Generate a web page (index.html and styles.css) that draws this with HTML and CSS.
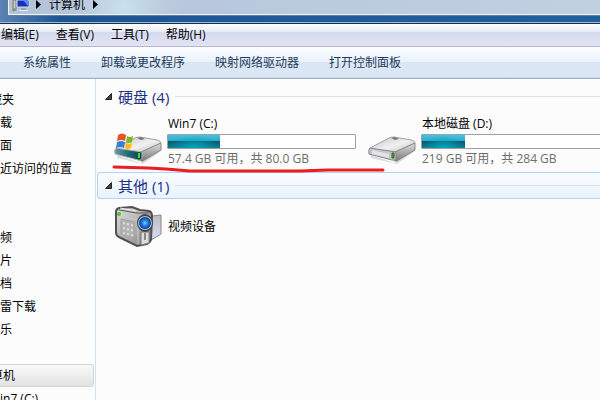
FILE: index.html
```html
<!DOCTYPE html>
<html lang="zh-CN">
<head>
  <meta charset="UTF-8" />
  <title>计算机</title>
  <link rel="stylesheet" href="styles.css">
</head>
<body>
  <header class="titlebar">
    <nav class="address">
      <svg class="pc-icon" width="18" height="12" viewBox="0 0 18 12">
        <path d="M1 0h3v10l-3 1z" fill="#c7ccc5" stroke="#737d82"/>
        <path d="M1 8h2v2H1z" fill="#51bd37"/>
        <path d="M5 0h12v7H5z" fill="#1633bd" stroke="#d3d8e3"/>
        <path d="M11 0h5v6z" fill="#6488ef"/>
        <path d="M9 8h5v2H9z" fill="#9aa3b5"/>
        <path d="M7 10h9v1H7z" fill="#e8ecf3"/>
      </svg>
      <svg width="5" height="9" viewBox="0 0 5 9"><path d="M0 0l5 4.500l-5 4.500z" fill="#000"/></svg>
      <a class="crumb" href="#">计算机</a>
      <svg width="5" height="9" viewBox="0 0 5 9"><path d="M0 0l5 4.500l-5 4.500z" fill="#000"/></svg>
    </nav>
  </header>

  <nav class="menubar">
    <button>编辑(E)</button>
    <button>查看(V)</button>
    <button>工具(T)</button>
    <button>帮助(H)</button>
  </nav>

  <div class="toolbar">
    <button>系统属性</button>
    <button>卸载或更改程序</button>
    <button>映射网络驱动器</button>
    <button>打开控制面板</button>
  </div>

  <div class="window">
    <nav class="sidebar">
      <a class="cut" href="#">藏夹</a>
      <a href="#">载</a>
      <a href="#">面</a>
      <a class="last" href="#">近访问的位置</a>
      <a href="#">频</a>
      <a href="#">片</a>
      <a href="#">档</a>
      <a href="#">雷下载</a>
      <a class="last-one" href="#">乐</a>
      <a class="cut selected" href="#">算机</a>
      <a href="#">in7 (C:)</a>
    </nav>

    <main class="content">
      <section>
        <h2 class="group">
          <svg width="7" height="7" viewBox="0 0 7 7"><path d="M6.500 .5v6h-6z" fill="#444" stroke="#222"/></svg>
          硬盘 (4)
        </h2>
        <div class="drives">
          <div class="drive">
            <svg class="icon" width="48" height="36" viewBox="0 0 48 36">
              <defs>
                <linearGradient id="top" x1="0" y1="0" x2="1" y2="1"><stop offset="0" stop-color="#bfc1c1"/><stop offset=".55" stop-color="#f1f1f1"/><stop offset="1" stop-color="#bbb"/></linearGradient>
                <linearGradient id="side" x1="0" y1="0" x2="0" y2="1"><stop offset="0" stop-color="#dedede"/><stop offset="1" stop-color="#777"/></linearGradient>
                <linearGradient id="teal" x1="0" y1="0" x2="1" y2="0"><stop offset="0" stop-color="#6999a5"/><stop offset=".5" stop-color="#216b7a"/><stop offset="1" stop-color="#153e48"/></linearGradient>
              </defs>
              <path d="M3 23l24 8 20-14v2L29 32 3 26z" fill="#ddd"/>
              <path d="M2 16l19-10q2-1 5-1l17 3q4 1 4 3L28 20 4 18z" fill="url(#top)" stroke="#a2a2a2"/>
              <path d="M27 20l20-9v7L29 29q-2 1-3-1z" fill="url(#side)" stroke="#888"/>
              <path d="M2 16q-2 2-1 6l23 6q4 1 4-3v-5z" fill="url(#teal)" stroke="#a9b4b8"/>
              <path d="M24 21h2v5h-2z" fill="#37e31a"/>
              <path d="M23 6l4 2 4-1-4-2z" fill="#777"/>
              <path d="M4 3q4-3 8 0l-1 6q-4-2-8 0z" fill="#e85222"/>
              <path d="M13 4q3 2 6 0l-1 6q-3 2-6 0z" fill="#78b91f"/>
              <path d="M3 10q4-2 8 0l-1 6q-4-2-8 0z" fill="#377fd1"/>
              <path d="M12 11q3 2 6 0l-1 5q-3 2-6 0z" fill="#ffb914"/>
            </svg>
            <div class="info">
              <span class="name">Win7 (C:)</span>
              <div class="bar"><div class="used" style="width: 28%"></div></div>
              <span class="free">57.4 GB 可用，共 80.0 GB</span>
            </div>
          </div>
          <div class="drive">
            <svg class="icon" width="48" height="36" viewBox="0 0 48 36">
              <path d="M3 23l24 8 20-14v2L29 32 3 26z" fill="#ddd"/>
              <path d="M2 16l19-10q2-1 5-1l17 3q4 1 4 3L28 20 4 18z" fill="url(#top)" stroke="#a2a2a2"/>
              <path d="M27 20l20-9v7L29 29q-2 1-3-1z" fill="url(#side)" stroke="#888"/>
              <path d="M2 16q-2 2-1 6l23 6q4 1 4-3v-5z" fill="#c4c4c9" stroke="#888"/>
              <path d="M4 18l17 4v4L4 22z" fill="#e3e3e9"/>
              <path d="M24 21h2v5h-2z" fill="#35c51c" stroke="#345e2e"/>
              <path d="M23 6l4 2 4-1-4-2z" fill="#777"/>
            </svg>
            <div class="info">
              <span class="name">本地磁盘 (D:)</span>
              <div class="bar"><div class="used" style="width: 23%"></div></div>
              <span class="free">219 GB 可用，共 284 GB</span>
            </div>
          </div>
          <svg class="marker" width="274" height="8" viewBox="0 0 274 8"><path d="M2 2l34 1 18 1 24 2h110l28-1 55 0" fill="none" stroke="#ed1c24" stroke-width="3" stroke-linecap="round" stroke-linejoin="round"/></svg>
        </div>
      </section>

      <section>
        <h2 class="group active">
          <svg width="7" height="7" viewBox="0 0 7 7"><path d="M6.500 .5v6h-6z" fill="#444" stroke="#222"/></svg>
          其他 (1)
        </h2>
        <div class="device">
          <svg class="camera" width="48" height="42" viewBox="0 0 48 42">
            <defs>
              <linearGradient id="body" x1="0" y1="0" x2="1" y2="1"><stop offset="0" stop-color="#ddd"/><stop offset=".6" stop-color="#aaa"/><stop offset="1" stop-color="#777"/></linearGradient>
              <linearGradient id="screen" x1="0" y1="0" x2="0" y2="1"><stop offset="0" stop-color="#bbb"/><stop offset="1" stop-color="#dcdcff"/></linearGradient>
              <radialGradient id="lens"><stop offset="0" stop-color="#8ed4ff"/><stop offset=".4" stop-color="#2289ea"/><stop offset="1" stop-color="#0e3a9a"/></radialGradient>
            </defs>
            <path d="M38 10l9-1v19l-10 6z" fill="url(#screen)" stroke="#888"/>
            <path d="M2 6q0-3 3-4l13-1 8 3 9 1q3 1 3 5l-1 24q-1 3-4 4l-10 2L5 31q-3-1-3-5z" fill="url(#body)" stroke="#515151" stroke-width="2"/>
            <path d="M5 4l18 3 12 0" fill="none" stroke="#555"/>
            <path d="M6 2l16 3" stroke="#eee"/>
            <path d="M4 9l20 5v24" fill="none" stroke="#ccc"/>
            <path d="M7 13l13 3v16L7 28z" fill="#b3b3b3" stroke="#a1a1a1"/>
            <path d="M9 17l2 .5m2 .5l2 .5m2 .5l2 .5M9 22l2 .5m2 .5l2 .5m2 .5l2 .5M9 27l2 .5m2 .5l2 .5m2 .5l2 .5" stroke="#ddd" stroke-width="2"/>
            <circle cx="5" cy="8" r="2" fill="#4ac630"/>
            <path d="M27 26h8v11l-8 2z" fill="#ddd" stroke="#777"/>
            <path d="M30 27h2v7h-2z" fill="#888"/>
            <ellipse cx="31" cy="17" rx="8" ry="9" fill="#444"/>
            <ellipse cx="31" cy="17" rx="7" ry="7" fill="#b3bccc"/>
            <circle cx="31" cy="17" r="6" fill="url(#lens)"/>
          </svg>
          <span class="name">视频设备</span>
        </div>
      </section>
    </main>
  </div>
</body>
</html>
```

FILE: styles.css
```css
* { box-sizing: border-box; }
body { margin: 0; height: 100vh; display: flex; flex-direction: column; overflow: hidden; background: #fcfcfc; color: #000; font-family: "Open Sans", "Noto Sans CJK SC", sans-serif; font-size: 12px; line-height: 16px; }
button { margin: 0; padding: 0; border: none; background: none; color: inherit; font: inherit; white-space: nowrap; }
a { color: inherit; text-decoration: none; white-space: nowrap; }
svg { display: block; flex-shrink: 0; }

.titlebar { height: 24px; flex-shrink: 0; padding-left: 7px; background: linear-gradient(90deg, #5b83b3, #1d5593 10%, #235f9d); border-bottom: 1px solid #12304f; box-shadow: inset 0 -1px #9fbbd8; }
.address { height: 16px; display: flex; align-items: flex-start; gap: 8px; padding: 0 4px; background: radial-gradient(circle at 116px 6px, #c8e0ee, #bfcfe0 32px, transparent 60px), linear-gradient(90deg, #b4c3d9, #c0d0e1); border: solid #5f7f9b; border-width: 0 0 1px 1px; box-shadow: inset 1px -1px #edf4f8; }
.crumb { margin-top: -3px; }
.pc-icon { margin-right: -2px; }

.menubar { height: 23px; flex-shrink: 0; display: flex; align-items: center; gap: 17px; padding-left: 1px; background: linear-gradient(#fff, #e7edf7 8px, #d5daed 8px, #e2e4f5); border-bottom: 1px solid #b3b8d0; }
.toolbar { height: 32px; flex-shrink: 0; display: flex; align-items: center; gap: 30px; padding-left: 23px; color: #1e395b; background: linear-gradient(#fdfeff, #e8f2fc 15px, #dbe6f4 15px, #dce7f5); border-bottom: 1px solid #a0afc8; box-shadow: inset 0 -1px #c9d9eb; }

.window { flex: 1; min-height: 0; display: flex; }
.sidebar { width: 96px; flex-shrink: 0; padding-top: 9px; overflow: hidden; border-right: 1px solid #d2e1f5; }
.sidebar a { display: block; height: 23px; line-height: 23px; }
/* list is scrolled sideways, long names lose their first letters */
.sidebar .cut { margin-left: -10px; }
.sidebar .last { margin-bottom: 46px; }
.sidebar .last-one { margin-bottom: 23px; }
.sidebar .selected { margin-right: 1px; line-height: 21px; border: 1px solid #d5d5d5; border-radius: 3px; background: linear-gradient(#f9f9f9, #e3e3e3); }

.content { flex: 1; min-width: 0; padding: 4px 0 0 1px; overflow: hidden; }
.group { height: 27px; margin: 0; padding-left: 8px; display: flex; align-items: center; gap: 6px; color: #1e3287; font-size: 15px; font-weight: normal; line-height: 20px; white-space: nowrap; }
.group::after { content: ""; flex: 1; height: 1px; background: #e2e2e2; }
.active { border: 1px solid #b5d2f5; border-right: none; border-radius: 3px 0 0 3px; padding-left: 7px; background: linear-gradient(#fafcff, #e9f2fd); }

.drives { position: relative; display: flex; gap: 12px; padding: 6px 0 4px 17px; }
.drive { display: flex; gap: 5px; }
.icon { margin-top: 16px; }
.info { width: 189px; display: flex; flex-direction: column; gap: 2px; }
.info span { padding-left: 1px; white-space: nowrap; }
.bar { height: 15px; border: 1px solid #a0a0a0; border-radius: 1px; background: #fff; }
.used { height: 100%; background: radial-gradient(ellipse at 50% 100%, #00a5bd, #00a5bd00 70%), linear-gradient(#42c5e6, #2fa9c9 6px, #08566c 6px, #0e7d92); }
.free { color: #6d6d6d; }
/* pen stroke over the list */
.marker { position: absolute; left: 15px; bottom: -1px; z-index: 1; }

.device { display: flex; align-items: center; gap: 6px; padding: 7px 0 0 17px; }
```
